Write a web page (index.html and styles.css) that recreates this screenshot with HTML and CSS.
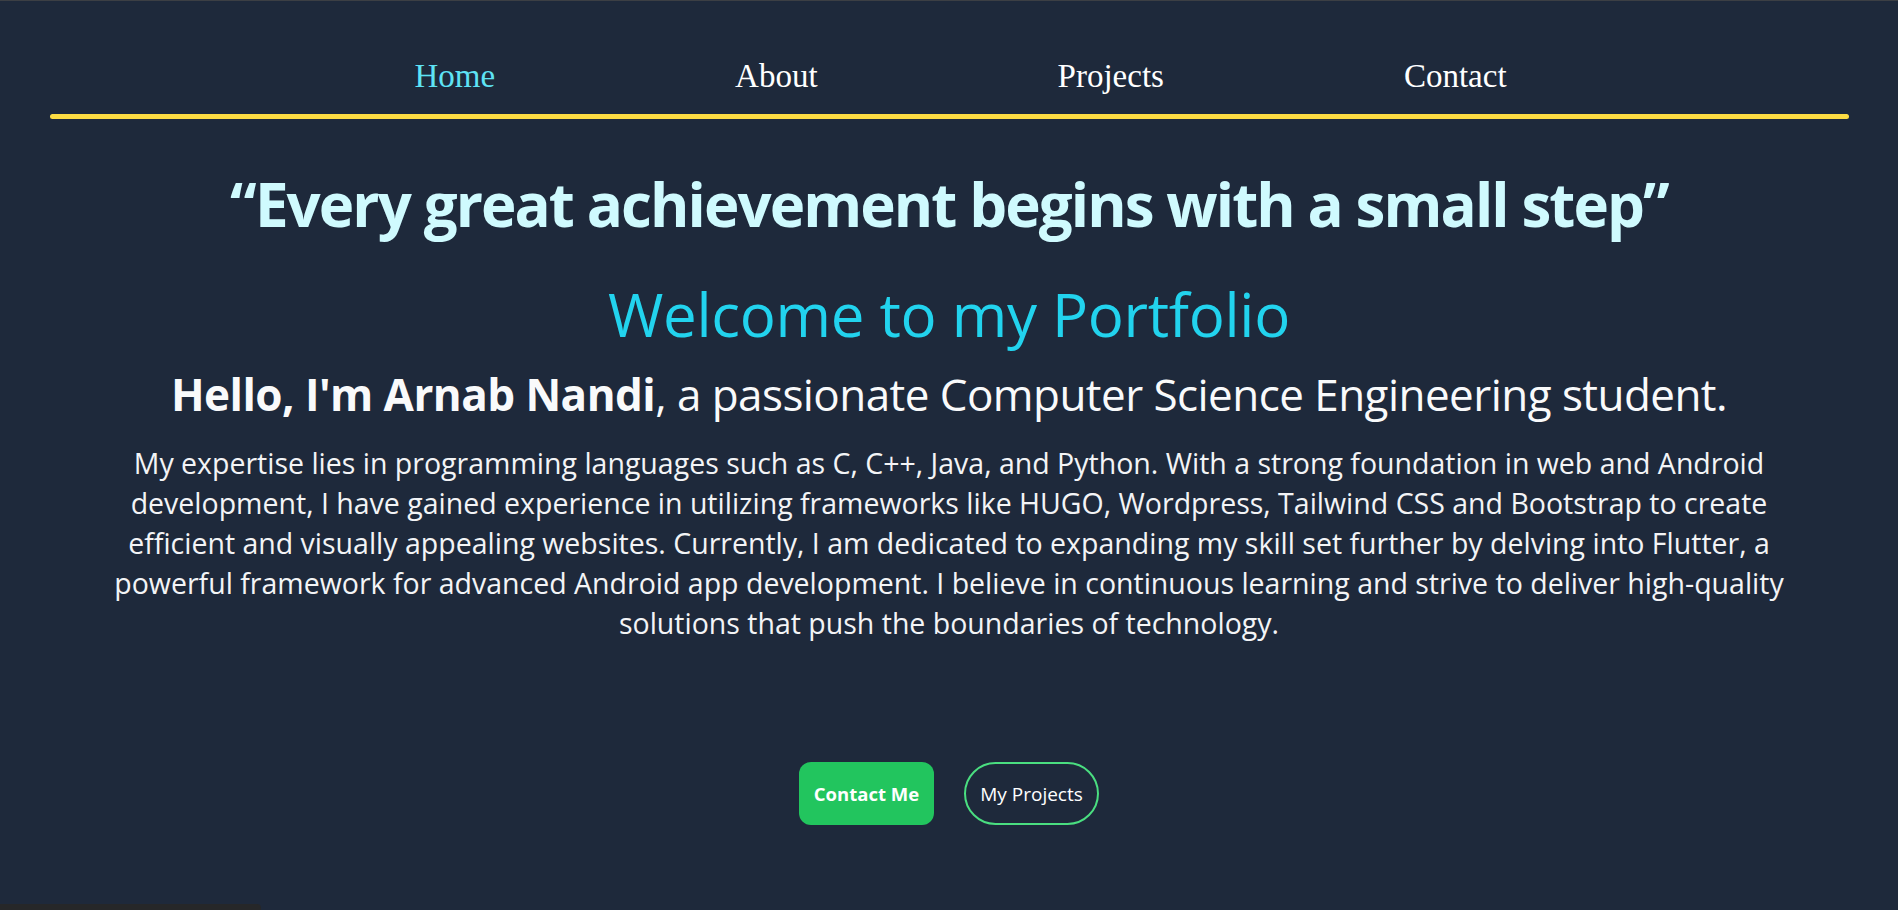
FILE: index.html
```html
<!DOCTYPE html>
<html lang="en">
<head>
<meta charset="utf-8">
<title>Arnab Nandi - Portfolio</title>
<link rel="stylesheet" href="styles.css">
</head>
<body>
<div class="topline"></div>
<header class="header">
  <nav class="nav">
    <a class="nav-link active" href="#">Home</a>
    <a class="nav-link" href="#">About</a>
    <a class="nav-link" href="#">Projects</a>
    <a class="nav-link" href="#">Contact</a>
  </nav>
  <div class="divider"></div>
</header>
<main class="hero">
  <h1 class="quote">“Every great achievement begins with a small step”</h1>
  <h2 class="welcome">Welcome to my Portfolio</h2>
  <p class="hello"><strong>Hello, I'm Arnab Nandi</strong>, a passionate Computer Science Engineering student.</p>
  <p class="about">My expertise lies in programming languages such as C, C++, Java, and Python. With a strong foundation in web and Android<br>development, I have gained experience in utilizing frameworks like HUGO, Wordpress, Tailwind CSS and Bootstrap to create<br>efficient and visually appealing websites. Currently, I am dedicated to expanding my skill set further by delving into Flutter, a<br>powerful framework for advanced Android app development. I believe in continuous learning and strive to deliver high-quality<br>solutions that push the boundaries of technology.</p>
  <div class="actions">
    <a class="btn btn-solid" href="#">Contact Me</a>
    <a class="btn btn-outline" href="#">My Projects</a>
  </div>
</main>
<div class="statusbar"></div>
</body>
</html>
```
FILE: styles.css
```css
* { box-sizing: border-box; }
html, body {
  margin: 0;
  padding: 0;
  background: #1e293b;
  height: 100%;
  overflow: hidden;
}
body {
  font-family: "Open Sans", "Noto Sans", sans-serif;
  color: #f3f4f6;
}
.topline {
  height: 1px;
  background: #3c3f44;
}
.header {
  padding: 57px 49px 0 50px;
}
.nav {
  display: flex;
  justify-content: center;
  gap: 240px;
  padding-left: 22px;
  height: 36px;
}
.nav-link {
  font-family: "Liberation Serif", "Times New Roman", serif;
  font-size: 33px;
  line-height: 36px;
  color: #ffffff;
  text-decoration: none;
}
.nav-link.active { color: #5ee3f5; }
.divider {
  margin-top: 20px;
  height: 5px;
  border-radius: 3px;
  background: #fddc43;
}
.hero {
  text-align: center;
  padding: 0 20px;
}
.quote {
  margin: 55px 0 0;
  font-size: 60px;
  line-height: 60px;
  font-weight: 700;
  letter-spacing: -1.9px;
  color: #cffafe;
}
.welcome {
  margin: 50px 0 0;
  font-size: 60px;
  line-height: 60px;
  font-weight: 400;
  letter-spacing: -0.3px;
  color: #22d3ee;
}
.hello {
  margin: 26px 0 0;
  font-size: 44px;
  line-height: 48px;
  letter-spacing: -0.55px;
  color: #f9fafb;
}
.hello strong { font-weight: 700; }
.about {
  margin: 25px 0 0;
  font-size: 28.5px;
  line-height: 40px;
  color: #f3f4f6;
  white-space: nowrap;
}
.actions {
  margin-top: 119px;
  display: flex;
  justify-content: center;
  gap: 30px;
}
.btn {
  display: inline-flex;
  align-items: center;
  justify-content: center;
  width: 135px;
  height: 63px;
  color: #ffffff;
  text-decoration: none;
}
.btn-solid {
  background: #22c55e;
  border-radius: 12px;
  font-size: 18.5px;
  font-weight: 700;
}
.btn-outline {
  border: 2px solid #4ade80;
  border-radius: 32px;
  font-size: 19px;
  font-weight: 400;
}
.statusbar {
  position: fixed;
  left: 0;
  bottom: 0;
  width: 261px;
  height: 6px;
  background: #262729;
  border-top-right-radius: 4px;
}
```
